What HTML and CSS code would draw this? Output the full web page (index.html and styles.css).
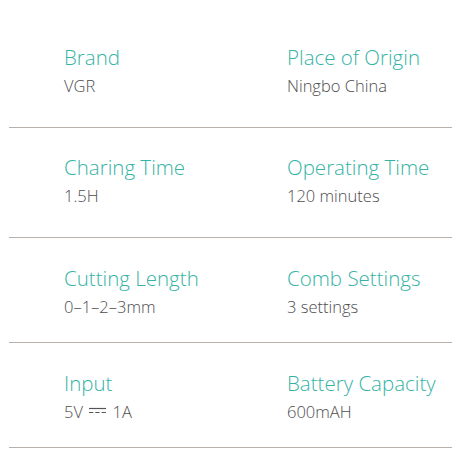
FILE: index.html
```html
<!DOCTYPE html>
<html lang="en">
<head>
    <meta charset="UTF-8">
    <meta name="viewport" content="width=device-width, initial-scale=1.0">
    <title>Specifications</title>
    <link rel="stylesheet" href="styles.css">
</head>
<body>
    <div class="specs">
        <div class="spec-row first">
            <div class="spec">
                <div class="label">Brand</div>
                <div class="value">VGR</div>
            </div>
            <div class="spec">
                <div class="label">Place of Origin</div>
                <div class="value">Ningbo China</div>
            </div>
        </div>

        <div class="spec-row">
            <div class="spec">
                <div class="label">Charing Time</div>
                <div class="value">1.5H</div>
            </div>
            <div class="spec">
                <div class="label">Operating Time</div>
                <div class="value">120 minutes</div>
            </div>
        </div>

        <div class="spec-row compact">
            <div class="spec">
                <div class="label">Cutting Length</div>
                <div class="value">0–1–2–3mm</div>
            </div>
            <div class="spec">
                <div class="label">Comb Settings</div>
                <div class="value">3 settings</div>
            </div>
        </div>

        <div class="spec-row compact">
            <div class="spec">
                <div class="label">Input</div>
                <div class="value">5V
                    <!-- DC symbol: solid line over dashed line -->
                    <svg class="dc" width="17" height="8" viewBox="0 0 17 8">
                        <line x1="0" y1="1.5" x2="17" y2="1.5" stroke="#555" stroke-width="1.2"/>
                        <line x1="0" y1="5.5" x2="17" y2="5.5" stroke="#555" stroke-width="1.2" stroke-dasharray="4.3 2"/>
                    </svg>
                    1A</div>
            </div>
            <div class="spec">
                <div class="label">Battery Capacity</div>
                <div class="value">600mAH</div>
            </div>
        </div>
    </div>
</body>
</html>
```

FILE: styles.css
```css
body {
    font-family: "Open Sans", Arial, sans-serif;
    background-color: #fff;
    margin: 0;
}

.specs {
    padding: 0 9px;
}

.spec-row {
    display: grid;
    grid-template-columns: 223px 1fr;
    padding: 25px 0 28px 55px;
    border-bottom: 1px solid #b9b0aa;
}

.spec-row.first {
    padding-top: 43px;
}

.spec-row.compact {
    padding-top: 26px;
    padding-bottom: 22px;
}

.label {
    font-size: 20.5px;
    font-weight: 300;
    line-height: 28px;
    margin-bottom: 2px;
    color: #35b3a5;
}

.value {
    font-size: 16.5px;
    font-weight: 300;
    line-height: 26px;
    color: #4d4d4d;
}

.dc {
    margin: 0 2px;
    vertical-align: 3px;
}
```
